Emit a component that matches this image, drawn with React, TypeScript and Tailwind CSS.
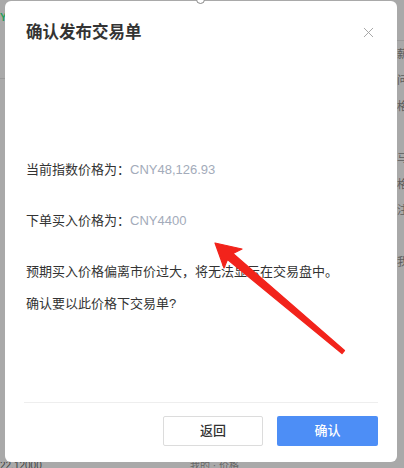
import { X } from 'lucide-react';

const font = { fontFamily: '"Liberation Sans", "Noto Sans CJK SC", sans-serif' };

// bits of the trading page that peek out around the dialog
const rightEdge = ['薪', '问', '格', '', '马', '格', '注', '', '我'];

function RedArrow() {
  return (
    <svg className="pointer-events-none absolute left-0 top-0" width="404" height="468" viewBox="0 0 404 468">
      <polygon
        points="215,243 242,249 233,253.5 344.5,350.5 342,353.5 227.5,259.5 224,268"
        fill="#f2231b"
        stroke="#f2231b"
        strokeWidth="1.2"
        strokeLinejoin="round"
      />
    </svg>
  );
}

function ConfirmDialog() {
  return (
    <div className="flex h-[461px] w-[392px] flex-col rounded-[6px] bg-white">
      <div className="flex items-center justify-between pl-[21px] pr-[20px] pt-[20px]">
        <h2 className="text-[16.5px] font-bold leading-[22px] text-[#333]">确认发布交易单</h2>
        <X className="h-[17px] w-[17px] text-[#a0a0a0]" strokeWidth={1.3} />
      </div>

      <div className="mt-[117px] flex flex-col px-[21px] text-[13px] leading-[20px] text-[#333]">
        <p>
          当前指数价格为：<span className="text-[#a3abba]">CNY48,126.93</span>
        </p>
        <p className="mt-[31px]">
          下单买入价格为：<span className="text-[#a3abba]">CNY4400</span>
        </p>
        <p className="mt-[31px]">预期买入价格偏离市价过大，将无法显示在交易盘中。</p>
        <p className="mt-[12px]">确认要以此价格下交易单?</p>
      </div>

      <div className="flex-1" />

      <div className="mx-[19px] flex justify-end gap-[14px] border-t border-[#eeeeee] pb-[16px] pt-[13px]">
        <button className="h-[30px] w-[100px] rounded-[2px] border border-[#dcdcdc] bg-white text-[13px] font-medium text-[#333]">
          返回
        </button>
        <button className="h-[30px] w-[101px] rounded-[2px] bg-[#4d8ef6] text-[13px] font-medium text-white">
          确认
        </button>
      </div>
    </div>
  );
}

export default function App() {
  return (
    <div className="relative flex h-[468px] w-[404px] flex-col overflow-hidden bg-[#a9a9a9]" style={font}>
      <div className="flex h-[462px]">
        <div className="flex w-[5px] flex-col overflow-hidden pt-[12px]">
          <span className="text-[10px] font-bold leading-[12px] text-[#1f9e5a]">Y</span>
          <div className="mt-[54px] h-px bg-[#999]" />
        </div>
        <div className="pt-[1px]">
          <ConfirmDialog />
        </div>
        <div className="flex flex-1 flex-col overflow-hidden pt-[40px]">
          <div className="h-px bg-[#999]" />
          <div className="mt-[6px] flex flex-col gap-[12px] text-[11px] leading-[14px] text-[#5c5c5c]">
            {rightEdge.map((ch, i) => (
              <span key={i} className="h-[14px] whitespace-nowrap">{ch}</span>
            ))}
          </div>
        </div>
      </div>
      <div className="flex h-[6px] items-start overflow-hidden text-[10px] leading-[8px] text-[#444]">
        <span className="w-[190px]">22.12000</span>
        <span className="text-[#666]">我的 · 价格</span>
      </div>
      <div className="absolute left-[196px] top-[-5px] h-[9px] w-[9px] rounded-full border border-[#888] bg-white" />
      <RedArrow />
    </div>
  );
}
